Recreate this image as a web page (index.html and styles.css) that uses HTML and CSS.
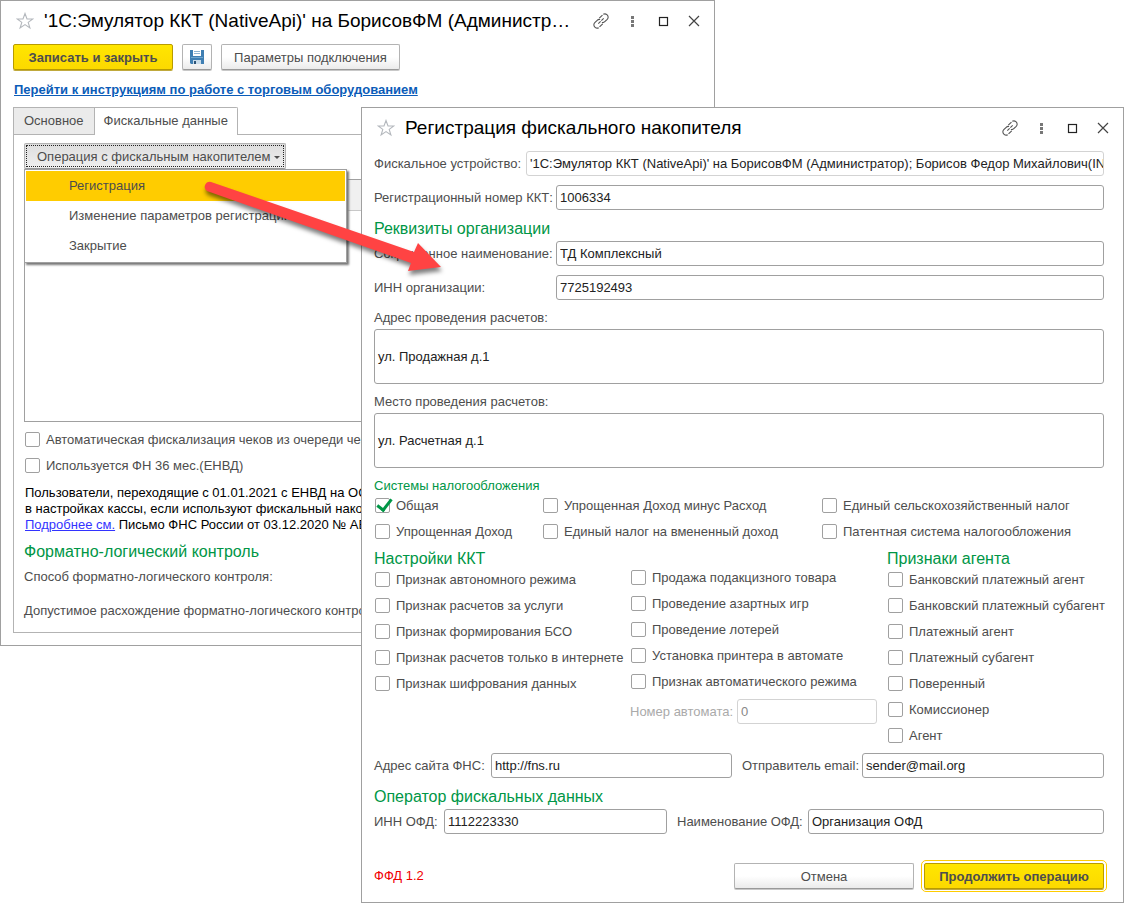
FILE: index.html
```html
<!DOCTYPE html>
<html lang="ru">
<head>
    <meta charset="UTF-8">
    <meta name="viewport" content="width=device-width, initial-scale=1.0">
    <title>Регистрация фискального накопителя</title>
    <link rel="stylesheet" href="styles.css">
</head>
<body>

<svg class="sprite" aria-hidden="true">
    <symbol id="star" viewBox="0 0 18 18">
        <path d="M9 1.500L11 7H16.800L12.200 10.400L13.900 16L9 12.600L4.100 16L5.800 10.400L1.200 7H7Z" fill="none" stroke="#b4b8bd" stroke-width="1.1"/>
    </symbol>
    <symbol id="link" viewBox="0 0 16 16">
        <g fill="none" stroke="#555" stroke-width="1.1">
            <path d="M6.300 5.200L9.600 1.900C10.800.7 12.400.4 13.900 1.700C15.500 3.100 15.500 4.900 14.200 6.300L11.800 8.700C10.900 9.600 9.900 9.800 8.900 9.500" stroke-dasharray="4.500 1 30"/>
            <path d="M9.700 10.800L6.400 14.100C5.200 15.300 3.600 15.600 2.100 14.300C.5 12.900.5 11.100 1.800 9.700L4.200 7.300C5.100 6.400 6.100 6.200 7.100 6.500" stroke-dasharray="4.500 1 30"/>
            <path d="M5.300 10.700L10.700 5.300" stroke-dasharray="3.300 1"/>
        </g>
    </symbol>
    <symbol id="dots" viewBox="0 0 16 16">
        <path d="M7 3h3v3H7zM7 7h3v3H7zM7 11h3v3H7z" fill="#777"/>
    </symbol>
    <symbol id="square" viewBox="0 0 16 16">
        <rect x="4.500" y="4.500" width="8" height="8" fill="none" stroke="#222" stroke-width="1.2"/>
    </symbol>
    <symbol id="close" viewBox="0 0 16 16">
        <path d="M3 3L13 13M13 3L3 13" stroke="#444" stroke-width="1.2"/>
    </symbol>
</svg>

<!-- Окно подключаемого оборудования -->
<section class="window window-device">
    <header class="titlebar">
        <button class="icon-btn star" aria-label="В избранное"><svg><use href="#star"/></svg></button>
        <h1>'1С:Эмулятор ККТ (NativeApi)' на БорисовФМ (Администр…</h1>
        <button class="icon-btn" aria-label="Ссылка"><svg><use href="#link"/></svg></button>
        <button class="icon-btn" aria-label="Ещё"><svg><use href="#dots"/></svg></button>
        <button class="icon-btn" aria-label="Развернуть"><svg><use href="#square"/></svg></button>
        <button class="icon-btn" aria-label="Закрыть"><svg><use href="#close"/></svg></button>
    </header>

    <div class="toolbar">
        <button class="btn btn-primary btn-save">Записать и закрыть</button>
        <button class="btn btn-disk" aria-label="Записать">
            <svg viewBox="0 0 14 14">
                <path d="M0 0H14V14H1L0 13Z" fill="#3f7fb3"/>
                <path d="M3 0h8v6H3z" fill="#fff"/>
                <path d="M4 1.500h6M4 3.500h6" stroke="#8fb5d3"/>
                <path d="M1 7h12v1H1z" fill="#6fa6cf"/>
                <path d="M3 10h8v4H3z" fill="#c9dcea"/>
                <path d="M4 11h2v3H4z" fill="#2c5478"/>
            </svg>
        </button>
        <button class="btn btn-params">Параметры подключения</button>
    </div>

    <a class="help-link" href="#">Перейти к инструкциям по работе с торговым оборудованием</a>

    <nav class="tabs">
        <button class="tab">Основное</button>
        <button class="tab active">Фискальные данные</button>
    </nav>

    <div class="panel">
        <div class="dropdown">
            <button class="btn btn-operation" aria-expanded="true">Операция с фискальным накопителем <span class="caret"></span></button>
            <div class="menu">
                <button class="selected">Регистрация</button>
                <button>Изменение параметров регистрации</button>
                <button>Закрытие</button>
            </div>
        </div>

        <div class="list"><div class="list-head"></div></div>

        <label class="check"><input type="checkbox">Автоматическая фискализация чеков из очереди чеков</label>
        <label class="check"><input type="checkbox">Используется ФН 36 мес.(ЕНВД)</label>

        <p class="note">Пользователи, переходящие с 01.01.2021 с ЕНВД на ОСН<br>
        в настройках кассы, если используют фискальный накопитель<br>
        <a href="#">Подробнее см.</a> Письмо ФНС России от 03.12.2020 № АБ</p>

        <h2>Форматно-логический контроль</h2>
        <p class="param">Способ форматно-логического контроля:</p>
        <p class="param">Допустимое расхождение форматно-логического контроля:</p>
    </div>
</section>

<!-- Окно регистрации -->
<section class="window window-register">
    <header class="titlebar">
        <button class="icon-btn star" aria-label="В избранное"><svg><use href="#star"/></svg></button>
        <h1>Регистрация фискального накопителя</h1>
        <button class="icon-btn" aria-label="Ссылка"><svg><use href="#link"/></svg></button>
        <button class="icon-btn" aria-label="Ещё"><svg><use href="#dots"/></svg></button>
        <button class="icon-btn" aria-label="Развернуть"><svg><use href="#square"/></svg></button>
        <button class="icon-btn" aria-label="Закрыть"><svg><use href="#close"/></svg></button>
    </header>

    <form class="form">
        <div class="rows">
            <div class="row">
                <label class="w-device" for="device">Фискальное устройство:</label>
                <input class="readonly" id="device" type="text" readonly value="'1С:Эмулятор ККТ (NativeApi)' на БорисовФМ (Администратор); Борисов Федор Михайлович(IN">
            </div>
            <div class="row">
                <label class="w-wide" for="regNumber">Регистрационный номер ККТ:</label>
                <input id="regNumber" type="text" value="1006334">
            </div>
        </div>

        <h2>Реквизиты организации</h2>
        <div class="rows">
            <div class="row">
                <label class="w-wide" for="orgName">Сокращенное наименование:</label>
                <input id="orgName" type="text" value="ТД Комплексный">
            </div>
            <div class="row">
                <label class="w-wide" for="orgInn">ИНН организации:</label>
                <input id="orgInn" type="text" value="7725192493">
            </div>
        </div>
        <label class="top-label" for="address">Адрес проведения расчетов:</label>
        <textarea id="address">ул. Продажная д.1</textarea>
        <label class="top-label" for="place">Место проведения расчетов:</label>
        <textarea id="place">ул. Расчетная д.1</textarea>

        <h3>Системы налогообложения</h3>
        <div class="taxes">
            <label class="check"><input type="checkbox" checked>Общая</label>
            <label class="check"><input type="checkbox">Упрощенная Доход минус Расход</label>
            <label class="check"><input type="checkbox">Единый сельскохозяйственный налог</label>
            <label class="check"><input type="checkbox">Упрощенная Доход</label>
            <label class="check"><input type="checkbox">Единый налог на вмененный доход</label>
            <label class="check"><input type="checkbox">Патентная система налогообложения</label>
        </div>

        <div class="options">
            <div>
                <h2>Настройки ККТ</h2>
                <label class="check"><input type="checkbox">Признак автономного режима</label>
                <label class="check"><input type="checkbox">Признак расчетов за услуги</label>
                <label class="check"><input type="checkbox">Признак формирования БСО</label>
                <label class="check"><input type="checkbox">Признак расчетов только в интернете</label>
                <label class="check"><input type="checkbox">Признак шифрования данных</label>
            </div>
            <div class="middle">
                <label class="check"><input type="checkbox">Продажа подакцизного товара</label>
                <label class="check"><input type="checkbox">Проведение азартных игр</label>
                <label class="check"><input type="checkbox">Проведение лотерей</label>
                <label class="check"><input type="checkbox">Установка принтера в автомате</label>
                <label class="check"><input type="checkbox">Признак автоматического режима</label>
                <div class="row machine">
                    <label for="machine">Номер автомата:</label>
                    <input id="machine" type="text" value="0" disabled>
                </div>
            </div>
            <div>
                <h2>Признаки агента</h2>
                <label class="check"><input type="checkbox">Банковский платежный агент</label>
                <label class="check"><input type="checkbox">Банковский платежный субагент</label>
                <label class="check"><input type="checkbox">Платежный агент</label>
                <label class="check"><input type="checkbox">Платежный субагент</label>
                <label class="check"><input type="checkbox">Поверенный</label>
                <label class="check"><input type="checkbox">Комиссионер</label>
                <label class="check"><input type="checkbox">Агент</label>
            </div>
        </div>

        <div class="pair pair-site">
            <div class="row">
                <label class="w-site" for="site">Адрес сайта ФНС:</label>
                <input id="site" type="text" value="http://fns.ru">
            </div>
            <div class="row">
                <label class="w-email" for="email">Отправитель email:</label>
                <input id="email" type="text" value="sender@mail.org">
            </div>
        </div>

        <h2>Оператор фискальных данных</h2>
        <div class="pair pair-ofd">
            <div class="row">
                <label class="w-ofd" for="ofdInn">ИНН ОФД:</label>
                <input id="ofdInn" type="text" value="1112223330">
            </div>
            <div class="row">
                <label class="w-ofd-name" for="ofdName">Наименование ОФД:</label>
                <input id="ofdName" type="text" value="Организация ОФД">
            </div>
        </div>

        <footer class="actions">
            <span class="version">ФФД 1.2</span>
            <button type="button" class="btn">Отмена</button>
            <button type="button" class="btn btn-primary btn-default">Продолжить операцию</button>
        </footer>
    </form>
</section>

<svg class="arrow" viewBox="0 0 260 110" aria-hidden="true">
    <path d="M15 11L218 81L222 72L245 96L212 100L215 92L11 20A5 5 0 0 1 15 11Z" fill="#ff4343"/>
</svg>

</body>
</html>
```

FILE: styles.css
```css
* {
    box-sizing: border-box;
}
body {
    margin: 0;
    background: #fff;
    color: #4d4d4d;
    font: 13px/16px "Liberation Sans", Arial, sans-serif;
}
h1, h2, h3, p {
    margin: 0;
    font-weight: normal;
}
button, input, textarea {
    font: inherit;
    color: inherit;
}
.sprite {
    display: none;
}

/* windows */
.window {
    position: absolute;
    background: #fff;
    border: 1px solid #a0a0a0;
}
.window-device {
    top: 0;
    left: 0;
    right: 409px;
    padding-bottom: 12px;
}
.window-register {
    top: 107px;
    left: 361px;
    right: 0;
}
.titlebar {
    display: flex;
    align-items: center;
    height: 40px;
    margin-bottom: 3px;
    padding: 0 5px 0 15px;
}
.titlebar h1 {
    flex: 1;
    min-width: 0;
    color: #000;
    font-size: 19px;
    line-height: 24px;
    white-space: nowrap;
}
.icon-btn {
    display: flex;
    align-items: center;
    justify-content: center;
    width: 31px;
    height: 30px;
    padding: 0;
    border: none;
    background: none;
}
.icon-btn svg {
    width: 16px;
    height: 16px;
}
.icon-btn.star {
    justify-content: flex-start;
    width: 28px;
}
.icon-btn.star svg {
    width: 18px;
    height: 18px;
}

/* buttons */
.btn {
    height: 26px;
    padding: 1px 12px 0;
    border: 1px solid #b3b3b3;
    border-bottom-color: #999;
    border-radius: 2px;
    background: linear-gradient(#fff 50%, #ebebeb);
    box-shadow: 0 1px 0 #c8c8c8;
}
.btn-primary {
    border-color: #b89b00;
    background: linear-gradient(#ffe600, #fcd900);
    font-weight: bold;
    box-shadow: 0 1px 0 #c0a93c;
}
.toolbar {
    display: flex;
    padding: 0 12px;
    gap: 9px;
}
.btn-save {
    width: 160px;
}
.btn-disk {
    display: flex;
    align-items: center;
    justify-content: center;
    width: 30px;
    padding: 0;
}
.btn-disk svg {
    width: 14px;
    height: 14px;
}
.btn-params {
    width: 179px;
}
.help-link {
    display: inline-block;
    margin: 12px 12px 9px 13px;
    color: #0b5cb8;
    font-weight: bold;
}

/* tabs */
.tabs {
    display: flex;
    padding: 0 12px;
}
.tab {
    height: 27px;
    padding: 0 10px;
    border: 1px solid #b3b3b3;
    border-right: none;
    border-bottom: none;
    background: #ebebeb;
}
.tab.active {
    z-index: 1;
    height: 28px;
    margin-bottom: -1px;
    padding: 0 9px 2px;
    border-right: 1px solid #b3b3b3;
    border-radius: 0 2px 0 0;
    background: #fff;
}
.panel {
    margin: 0 12px;
    padding: 8px 10px 4px;
    border: 1px solid #b3b3b3;
    white-space: nowrap;
}
.dropdown {
    position: relative;
    width: 262px;
}
.btn-operation {
    width: 100%;
    background: linear-gradient(#dedede, #efefef);
    outline: 1px dotted #222;
    outline-offset: -3px;
}
.caret {
    display: inline-block;
    border: 3px solid transparent;
    border-top-color: #4d4d4d;
    border-bottom: none;
    vertical-align: middle;
}
.menu {
    position: absolute;
    top: 26px;
    left: 0;
    width: 323px;
    padding: 1px;
    border: 1px solid #a0a0a0;
    background: #fff;
    box-shadow: 2px 2px 2px #777;
}
.menu button {
    display: block;
    width: 100%;
    height: 30px;
    padding: 0 43px;
    border: none;
    background: none;
    text-align: left;
}
.menu .selected {
    background: #ffcc00;
}
.list {
    height: 243px;
    margin: 10px 0 4px;
    border: 1px solid #a0a0a0;
}
.list-head {
    height: 31px;
    border-bottom: 1px solid #c8c8c8;
    background: #f0f0f0;
}
.note {
    margin: 7px 0 11px;
    padding-left: 1px;
    color: #000;
}
.note a {
    color: #3333ff;
}
.param {
    padding: 9px 0;
}

/* form */
h2 {
    color: #009646;
    font-size: 16px;
    line-height: 16px;
}
h3 {
    padding-top: 11px;
    color: #009646;
    font-size: 13px;
    line-height: 13px;
}
.form {
    padding: 0 19px 13px 12px;
}
.form > h2 {
    padding: 11px 0 4px;
}
.rows {
    display: flex;
    flex-direction: column;
    gap: 9px;
}
.row {
    display: flex;
    align-items: center;
    white-space: nowrap;
}
.w-device {
    width: 152px;
}
.w-wide {
    width: 182px;
}
.w-site {
    width: 117px;
}
.w-email {
    width: 120px;
}
.w-ofd {
    width: 70px;
}
.w-ofd-name {
    width: 131px;
}
input[type="text"], textarea {
    flex: 1;
    min-width: 0;
    height: 25px;
    padding: 0 3px;
    border: 1px solid #a0a0a0;
    border-radius: 3px;
    background: #fff;
    color: #222;
}
input.readonly, input[type="text"]:disabled {
    border-color: #d3d3d3;
}
input.readonly {
    padding-right: 0;
}
input[type="text"]:disabled {
    color: #888;
}
.top-label {
    display: block;
    padding: 10px 0 3px;
}
textarea {
    display: block;
    width: 100%;
    height: 55px;
    padding: 19px 3px 17px;
    resize: none;
}
.check {
    display: flex;
    align-items: center;
    height: 26px;
    padding-top: 2px;
    gap: 6px;
    white-space: nowrap;
}
.check input {
    appearance: none;
    width: 15px;
    height: 15px;
    margin: 0 0 2px 1px;
    border: 1px solid #a0a0a0;
    border-radius: 2px;
    background: #fff;
}
.check input:checked {
    position: relative;
}
.check input:checked::after {
    content: "";
    position: absolute;
    left: 4px;
    top: -3px;
    width: 6px;
    height: 12px;
    border: solid #009646;
    border-width: 0 3px 3px 0;
    transform: rotate(38deg);
}
.taxes {
    display: grid;
    grid-template-columns: 168px 279px 1fr;
}
.options {
    display: grid;
    grid-template-columns: 256px 257px 1fr;
    margin-bottom: 5px;
}
.options h2 {
    padding-top: 7px;
    margin-bottom: -1px;
}
.middle {
    padding-top: 20px;
}
.machine {
    margin: 5px 10px 0 0;
    gap: 4px;
    color: #aaa;
}
.pair {
    display: grid;
    gap: 10px;
}
.pair-site {
    grid-template-columns: 358fr 362fr;
}
.pair-ofd {
    grid-template-columns: 293fr 427fr;
}
.actions {
    display: flex;
    align-items: center;
    gap: 10px;
    margin-top: 29px;
}
.actions .btn {
    width: 180px;
}
.actions .btn-default {
    outline: 1px solid #ffcc00;
    outline-offset: 2px;
}
.version {
    flex: 1;
    color: #f00000;
}

/* pointer from the menu item to the opened window */
.arrow {
    position: absolute;
    top: 171px;
    left: 196px;
    width: 260px;
    height: 110px;
    filter: drop-shadow(1px 4px 2px rgba(0, 0, 0, 0.5));
    pointer-events: none;
}
```
